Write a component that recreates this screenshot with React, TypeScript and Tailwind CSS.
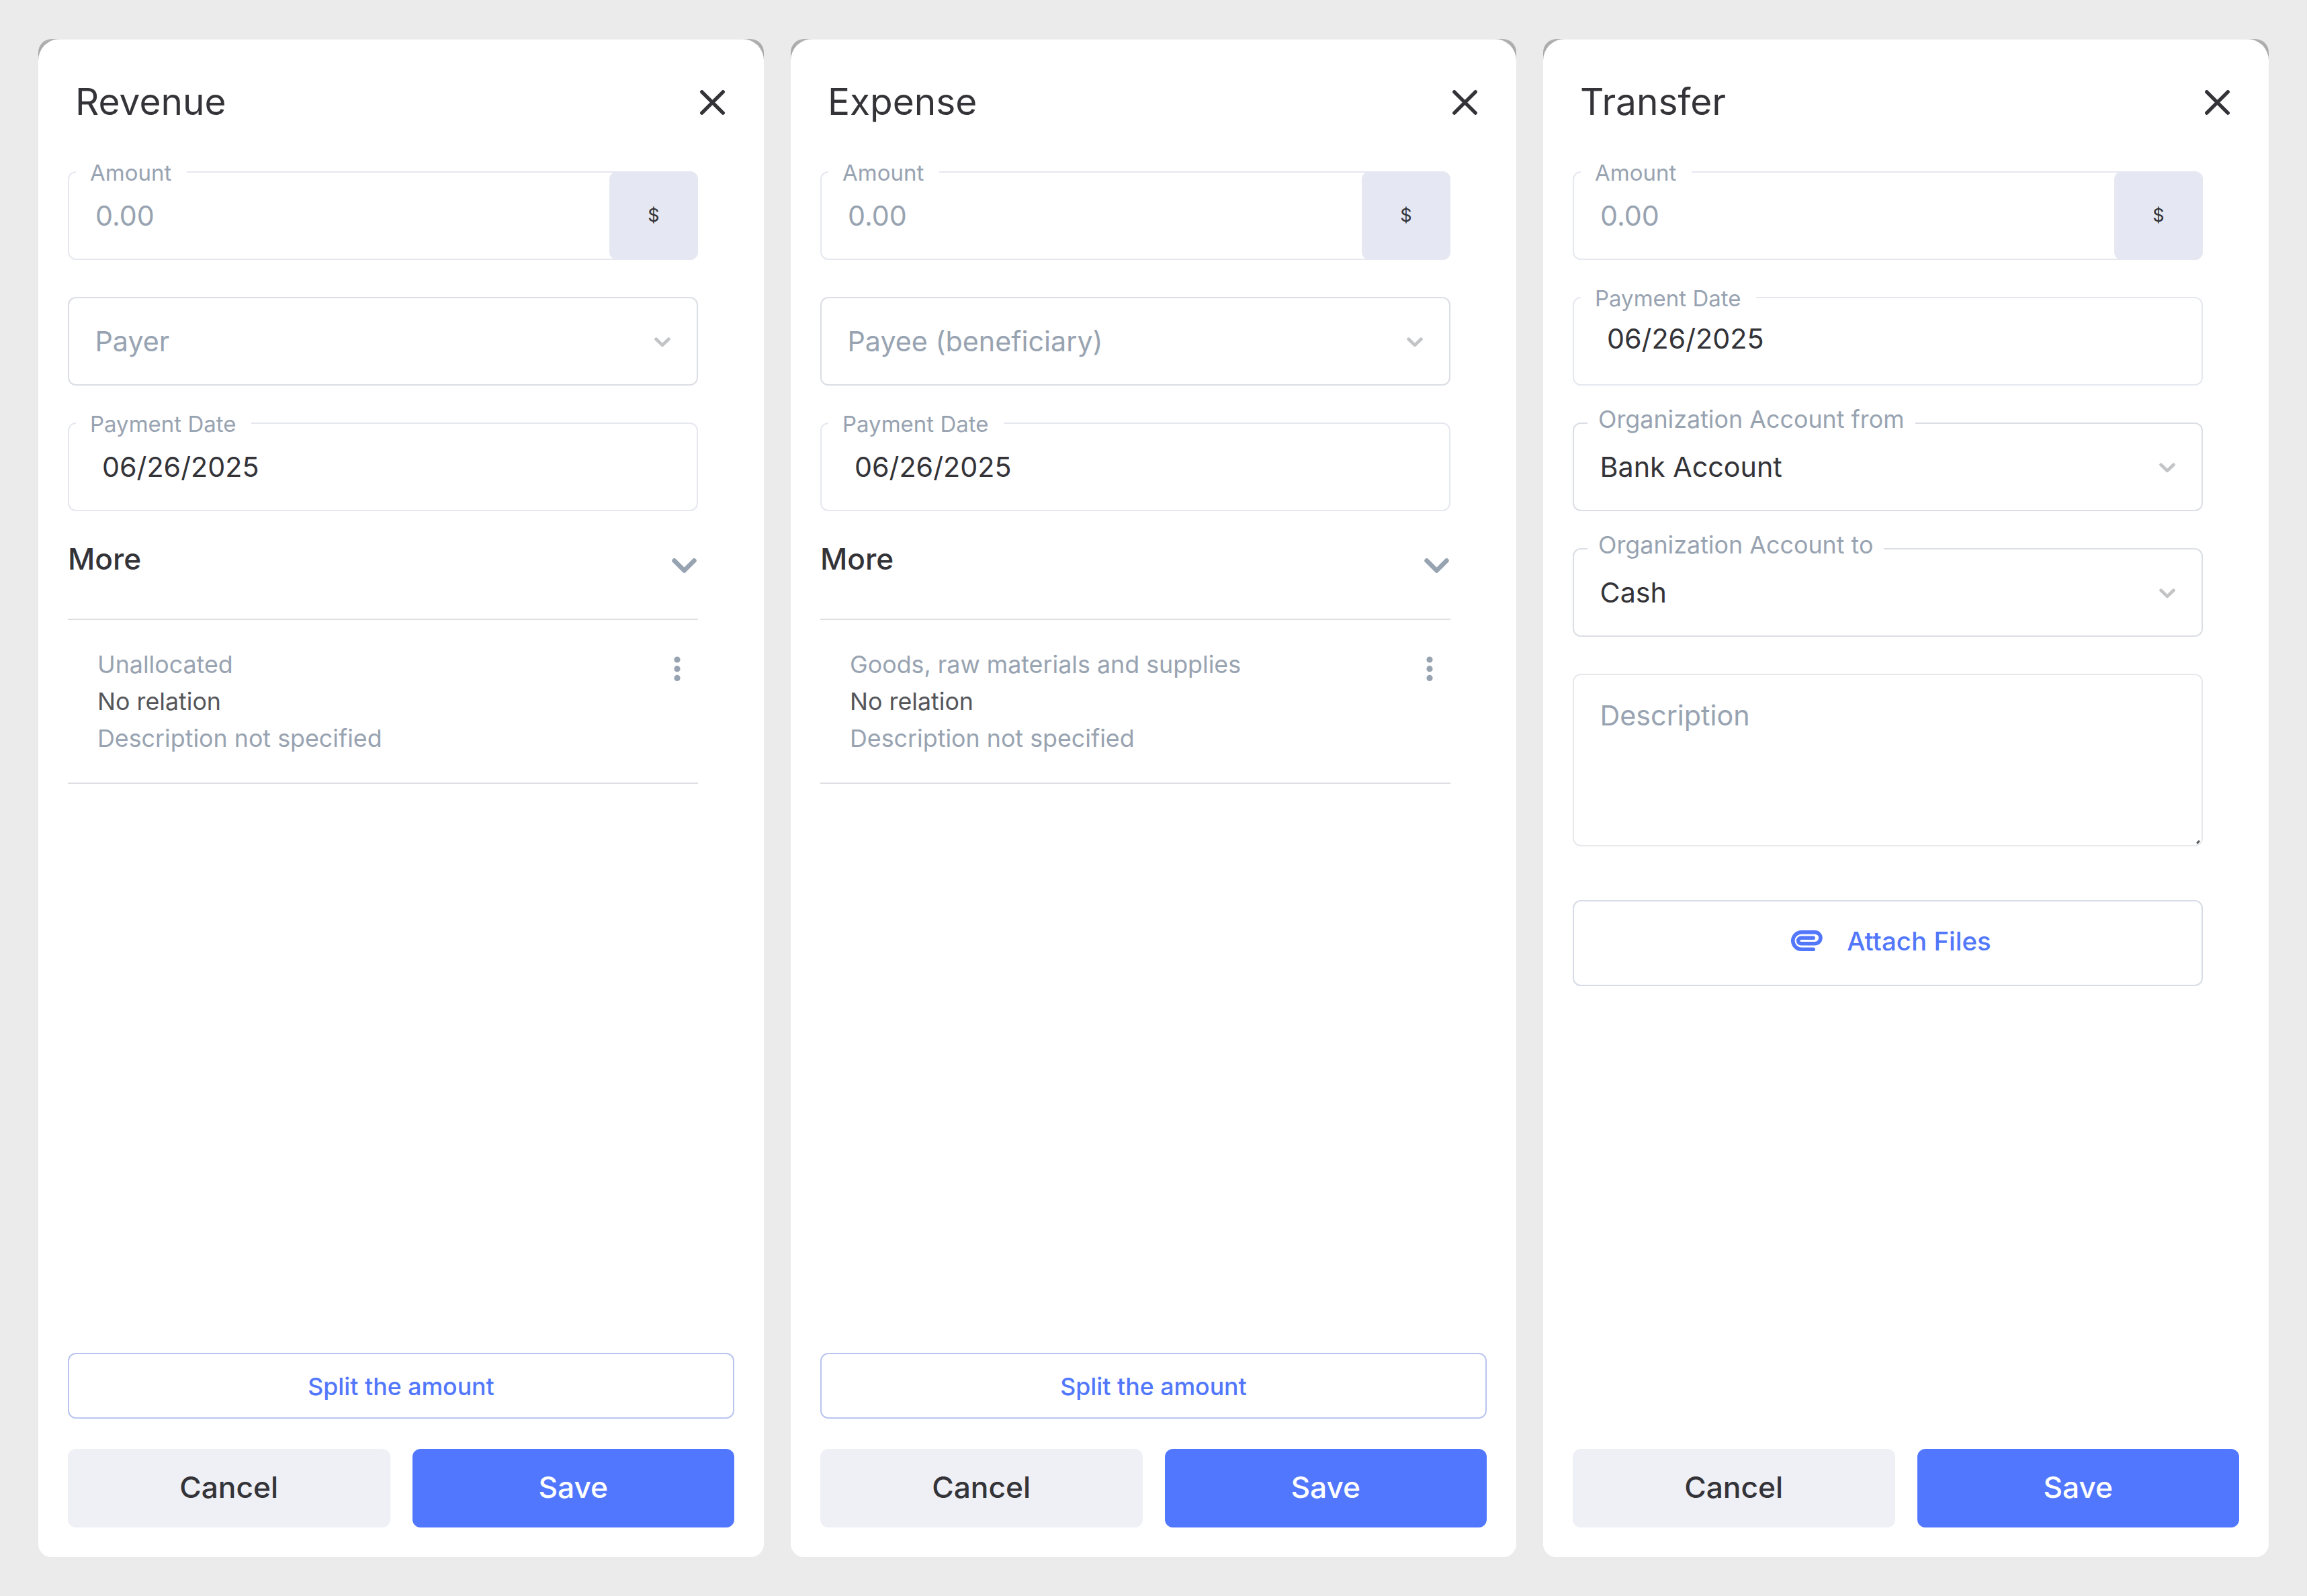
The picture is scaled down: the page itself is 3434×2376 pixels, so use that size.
import type { ReactNode } from 'react';

function CloseIcon() {
  return (
    <svg width="37" height="37" viewBox="0 0 37 37" className="block" fill="none" stroke="#333338" strokeWidth="5.4" strokeLinecap="round">
      <path d="M2.8 2.8 34.2 34.2M34.2 2.8 2.8 34.2" />
    </svg>
  );
}

function SmallChevron() {
  return (
    <svg width="24" height="15" viewBox="0 0 24 15" className="block" fill="none" stroke="#c3c4c6" strokeWidth="4.8" strokeLinecap="round" strokeLinejoin="round">
      <path d="M2.6 2.8 12 11.9 21.4 2.8" />
    </svg>
  );
}

function LargeChevron() {
  return (
    <svg width="37" height="23" viewBox="0 0 37 23" className="block" fill="none" stroke="#98a3b1" strokeWidth="6.8" strokeLinecap="round" strokeLinejoin="round">
      <path d="M3.7 3.7 18.5 18.4 33.3 3.7" />
    </svg>
  );
}

function DotsIcon() {
  return (
    <svg width="10" height="38" viewBox="0 0 10 38" className="block" fill="#98a3b1">
      <circle cx="5" cy="5" r="4.6" />
      <circle cx="5" cy="18.7" r="4.6" />
      <circle cx="5" cy="32.4" r="4.6" />
    </svg>
  );
}

function ClipIcon() {
  return (
    <svg width="47" height="31" viewBox="0 0 47 31" className="block" fill="none" stroke="#5277fa" strokeWidth="5.6" strokeLinecap="round">
      <path d="M33.2 28.2H15.4A12.6 12.6 0 0 1 15.4 2.9H35.6A8.4 8.4 0 0 1 35.6 19.7H14.8A4.2 4.2 0 0 1 14.8 11.3H33.2" />
    </svg>
  );
}

function NotchLabel({ children }: { children: string }) {
  return (
    <span className="absolute -top-3 left-[10px] whitespace-nowrap bg-white pr-[23px] pl-[21px] text-[33px] leading-6 text-[#98a3b1]">
      {children}
    </span>
  );
}

function AmountField() {
  return (
    <div className="relative flex h-[132px] items-center rounded-xl border-2 border-[#e6e8f0]">
      <NotchLabel>Amount</NotchLabel>
      <span className="flex-1 pl-[39px] text-[#98a3b1]">0.00</span>
      <span className="-my-0.5 -mr-0.5 flex h-[132px] w-[132px] items-center justify-center rounded-xl bg-[#e5e8f2] pb-px text-[27px] text-[#333338]">
        $
      </span>
    </div>
  );
}

function DateField({ raised = false }: { raised?: boolean }) {
  return (
    <div className={`relative flex h-[132px] items-center rounded-xl border-2 border-[#e6e8f0] pl-[49px] text-[#333338] ${raised ? 'pb-2' : ''}`}>
      <NotchLabel>Payment Date</NotchLabel>
      06/26/2025
    </div>
  );
}

function SelectField({ label, placeholder, value }: { label?: string; placeholder?: string; value?: string }) {
  return (
    <div className="relative flex h-[132px] items-center justify-between rounded-xl border-2 border-[#dbdee4] pr-[39.5px] pl-[38.5px]">
      {label && (
        <span className="absolute -top-[19px] left-5 whitespace-nowrap bg-white px-4 text-[35.85px] leading-6 text-[#98a3b1]">{label}</span>
      )}
      {value ? <span className="text-[#333338]">{value}</span> : <span className="text-[#98a3b1]">{placeholder}</span>}
      <span className="pt-[3px]">
        <SmallChevron />
      </span>
    </div>
  );
}

function MoreSection({ category }: { category: string }) {
  return (
    <section className="w-[938px]">
      <div className="flex h-[160px] items-start justify-between">
        <h2 className="pt-[49px] text-[44.2px] leading-[44px] font-medium text-[#333338]">More</h2>
        <span className="pt-[70px] pr-[2px]">
          <LargeChevron />
        </span>
      </div>
      <div className="flex h-[246px] items-start justify-between border-y-2 border-[#dddfe2] pt-[39px] pr-[26.5px] pl-11 text-[35.8px] leading-[55px] text-[#98a3b1]">
        <div>
          <p>{category}</p>
          <p className="text-[#55565a]">No relation</p>
          <p>Description not specified</p>
        </div>
        <span className="pt-[15px]">
          <DotsIcon />
        </span>
      </div>
    </section>
  );
}

function Panel({ title, split = false, children }: { title: string; split?: boolean; children: ReactNode }) {
  return (
    <div className="h-[2260px] w-[1080px] rounded-[20px] bg-[linear-gradient(#b0b0b0_0,#a4a4a4_34px,#ffffff_40px)]">
      <div className="flex h-full flex-col rounded-t-[32px] rounded-b-[20px] bg-[linear-gradient(#efefef_1px,#ffffff_1px)] px-11 pb-11">
        <header className="mb-[11px] flex h-[186px] shrink-0 items-center justify-between pr-[14.5px] pl-[11px]">
          <h1 className="text-[55px] leading-none text-[#333338]">{title}</h1>
          <span className="pt-0.5">
            <CloseIcon />
          </span>
        </header>
        {children}
        <footer className="mt-auto flex flex-col gap-[45px] font-medium">
          {split && (
            <button className="flex h-[98px] items-center justify-center rounded-xl border-2 border-[#b9c5ef] pt-[3px] text-[35.7px] text-[#5277fa]">
              Split the amount
            </button>
          )}
          <div className="flex gap-[33px] text-[44.3px]">
            <button className="flex h-[117px] flex-1 items-center justify-center rounded-xl bg-[#eff0f6] pb-[3px] text-[#333338]">Cancel</button>
            <button className="flex h-[117px] flex-1 items-center justify-center rounded-xl bg-[#5277ff] pb-[3px] text-white">Save</button>
          </div>
        </footer>
      </div>
    </div>
  );
}

function Fields({ children }: { children: ReactNode }) {
  return <div className="flex w-[938px] flex-col gap-[55px] text-[41.25px] leading-[50px]">{children}</div>;
}

export default function App() {
  return (
    <main className="flex h-[2376px] w-[3434px] gap-10 bg-[#ebebeb] pt-[58px] pl-[57px] font-['Inter',sans-serif]">
      <Panel title="Revenue" split>
        <Fields>
          <AmountField />
          <SelectField placeholder="Payer" />
          <DateField />
        </Fields>
        <MoreSection category="Unallocated" />
      </Panel>
      <Panel title="Expense" split>
        <Fields>
          <AmountField />
          <SelectField placeholder="Payee (beneficiary)" />
          <DateField />
        </Fields>
        <MoreSection category="Goods, raw materials and supplies" />
      </Panel>
      <Panel title="Transfer">
        <Fields>
          <AmountField />
          <DateField raised />
          <SelectField label="Organization Account from" value="Bank Account" />
          <SelectField label="Organization Account to" value="Cash" />
          <div className="relative h-[257px] rounded-xl border-2 border-[#e6e8ec] pt-[35px] pl-[38.5px] text-[#98a3b1]">
            Description
            <svg width="7" height="7" viewBox="0 0 7 7" className="absolute right-px bottom-px" stroke="#58595b" strokeWidth="3" strokeLinecap="round">
              <path d="M2 4.6 4 2.6" />
            </svg>
          </div>
          <button className="mt-[25px] flex h-[128px] items-center justify-center gap-9 rounded-xl border-2 border-[#d8dce6] pb-[7px] pl-[10px] text-[38.5px] font-medium text-[#5277fa]">
            <ClipIcon />
            Attach Files
          </button>
        </Fields>
      </Panel>
    </main>
  );
}
